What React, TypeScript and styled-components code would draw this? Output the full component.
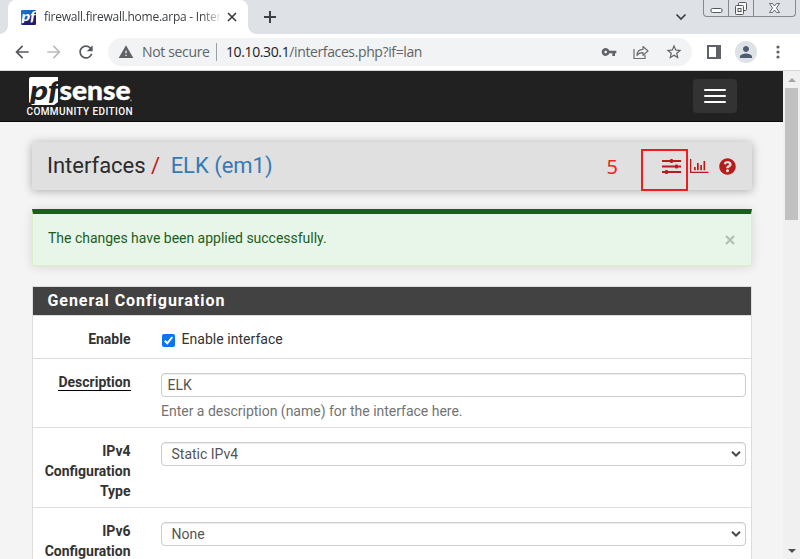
import React from 'react';
import styled, { createGlobalStyle } from 'styled-components';
import { FaQuestionCircle } from 'react-icons/fa';
import { MdVpnKey, MdStarOutline, MdPerson, MdRefresh, MdArrowBack, MdArrowForward, MdWarning } from 'react-icons/md';

const GlobalStyle = createGlobalStyle`
  *, *::before, *::after { box-sizing: border-box; }
  html, body { margin: 0; height: 100%; overflow: hidden; }
  body { font-family: Roboto, "Liberation Sans", sans-serif; font-size: 14px; }
  svg { display: block; flex: none; overflow: visible; }
  button { border: 0; padding: 0; background: none; font: inherit; }
`;

const Window = styled.div`
  width: 800px;
  height: 559px;
  display: flex;
  flex-direction: column;
  overflow: hidden;
  background: #fff;
`;

/* Browser chrome */
const TabStrip = styled.header`
  height: 34px;
  flex: none;
  display: flex;
  background: #dee1e6;
  padding-left: 8px;
`;
const Tab = styled.div`
  position: relative;
  width: 240px;
  height: 34px;
  display: flex;
  align-items: center;
  padding: 0 11px 0 13px;
  background: #fff;
  border-radius: 8px 8px 0 0;
  &::before, &::after {
    content: "";
    position: absolute;
    bottom: 0;
    width: 8px;
    height: 8px;
  }
  &::before { left: -8px; background: radial-gradient(circle at 0 0, transparent 7.5px, #fff 8px); }
  &::after { right: -8px; background: radial-gradient(circle at 100% 0, transparent 7.5px, #fff 8px); }
`;
const TabTitle = styled.span`
  width: 176px;
  margin-left: 8px;
  white-space: nowrap;
  font: 12px/16px "Open Sans", sans-serif;
  letter-spacing: -0.24px;
  color: #3c4043;
  mask-image: linear-gradient(90deg, #000 158px, transparent 178px);
`;
const TabClose = styled.button`
  margin-left: auto;
`;
const NewTab = styled.button`
  margin: 10px 0 0 15px;
  height: 14px;
`;
const TabSearch = styled.button`
  margin: 13px 16px 0 auto;
  height: 8px;
`;
const WindowControls = styled.div`
  display: flex;
  width: 93px;
  height: 17px;
  margin-right: 4px;
  border: 1px solid #85888d;
  border-top: 0;
  border-radius: 0 0 4px 4px;
`;
const WindowButton = styled.button<{ $w: number }>`
  width: ${p => p.$w}px;
  display: flex;
  justify-content: center;
  & + & { border-left: 1px solid #85888d; }
`;
const Toolbar = styled.div`
  height: 37px;
  flex: none;
  display: flex;
  align-items: center;
  padding: 0 13px 0 12px;
  border-bottom: 1px solid #d5d6d8;
  color: #5f6368;
`;
const NavButton = styled.button<{ $dim?: boolean }>`
  width: 18px;
  margin-right: 14px;
  color: ${p => (p.$dim ? '#babcbe' : '#55585d')};
`;
const Omnibox = styled.div`
  width: 584px;
  height: 28px;
  display: flex;
  align-items: center;
  padding: 0 9px 0 10px;
  border-radius: 14px;
  background: #f1f3f4;
  font: 14px/20px "Open Sans", sans-serif;
`;
const Security = styled.span`
  margin-left: 8px;
  width: 74px;
  padding-bottom: 1px;
  white-space: nowrap;
  letter-spacing: -0.34px;
`;
const Url = styled.span`
  height: 18px;
  padding-left: 9px;
  border-left: 1px solid #9aa0a6;
  line-height: 17px;
  letter-spacing: -0.38px;
  b { font-weight: 400; color: #202124; }
`;
const OmniActions = styled.div`
  margin-left: auto;
  display: flex;
  align-items: center;
  gap: 16px;
`;
const ToolActions = styled.div`
  display: flex;
  align-items: center;
  margin-left: 15px;
`;
const Avatar = styled.div`
  width: 22px;
  height: 22px;
  margin: 0 19px 0 14px;
  display: grid;
  place-items: center;
  border-radius: 50%;
  background: #dee1e6;
  color: #4f5b70;
`;

/* Page */
const Viewport = styled.div`
  flex: 1;
  min-height: 0;
  display: flex;
`;
const Page = styled.div`
  flex: 1;
  height: 488px;
  overflow: hidden;
  background: #f4f4f4;
  color: #333;
`;
const Navbar = styled.nav`
  height: 51px;
  display: flex;
  align-items: center;
  justify-content: space-between;
  padding: 0 46px 0 26px;
  background: #212121;
  border-bottom: 1px solid #080808;
`;
const Brand = styled.div`
  width: 108px;
  height: 40px;
  color: #fff;
`;
const LogoRow = styled.div`
  display: flex;
  height: 30px;
  padding: 1px 0 0 3px;
`;
const Edition = styled.div`
  padding-left: 0.5px;
  font: 500 10px/12px Roboto, sans-serif;
  letter-spacing: 0.4px;
  white-space: nowrap;
`;
const MenuToggle = styled.button`
  width: 44px;
  height: 34px;
  display: flex;
  flex-direction: column;
  align-items: center;
  justify-content: center;
  gap: 4px;
  border-radius: 4px;
  background: #333;
`;
const MenuBar = styled.span`
  width: 22px;
  height: 2px;
  background: #fff;
  border-radius: 1px;
`;
const Content = styled.main`
  padding: 20px 31px 0 32px;
`;
const TitleBar = styled.section`
  position: relative;
  height: 48px;
  display: flex;
  align-items: center;
  padding: 0 16px 0 15px;
  background: #e0e0e0;
  border-radius: 2px;
  box-shadow: 0 1px 10px rgba(0, 0, 0, 0.3);
`;
const Crumbs = styled.h1`
  margin: 0;
  display: flex;
  font: 400 22px/30px Roboto, sans-serif;
  letter-spacing: -0.02px;
  color: #2b2b2b;
  a { color: #337ab7; }
`;
const Slash = styled.span`
  margin: 0 10.5px 0 5.5px;
  color: #b71c1c;
`;
const TitleIcons = styled.div`
  margin-left: auto;
  display: flex;
  align-items: center;
  color: #b71c1c;
`;
const ChartSlot = styled.span`
  margin: 0 10px 0 9px;
`;
const CalloutFrame = styled.div`
  position: absolute;
  left: 609px;
  top: 7px;
  width: 47px;
  height: 42px;
  border: 2px solid #ee1c25;
`;
const CalloutNumber = styled.span`
  position: absolute;
  left: 574.5px;
  top: 11px;
  font: 20px/28px "Noto Sans", sans-serif;
  color: #fa1c22;
`;
const Alert = styled.section`
  height: 57px;
  margin-top: 19px;
  display: flex;
  justify-content: space-between;
  padding: 14px 16px 0 15px;
  border: 1px solid #dcedc8;
  border-top: 5px solid #1b5e20;
  background: #e8f5e9;
  box-shadow: 0 1px 10px rgba(0, 0, 0, 0.12);
  color: #1b5e20;
  line-height: 20px;
  letter-spacing: -0.02px;
`;
const AlertClose = styled.button`
  height: 10px;
  margin-top: 7px;
`;
const Panel = styled.section`
  margin-top: 20px;
  height: 320px;
  background: #fff;
  border: 1px solid #ddd;
`;
const PanelTitle = styled.h2`
  margin: 0;
  height: 29px;
  padding-left: 14.5px;
  background: #424242;
  border-bottom: 1px solid #ddd;
  color: #fff;
  font: 700 16px/28px Roboto, sans-serif;
  letter-spacing: 0.95px;
`;
const Row = styled.div<{ $h: number; $top: number }>`
  height: ${p => p.$h}px;
  display: grid;
  grid-template-columns: 97.5px 585px;
  column-gap: 30.5px;
  align-items: start;
  padding-top: ${p => p.$top}px;
  border-bottom: 1px solid #ddd;
  line-height: 20px;
`;
const Label = styled.div<{ $lift?: boolean }>`
  margin-top: ${p => (p.$lift ? -1 : 0)}px;
  text-align: right;
  font-weight: 700;
  color: #333;
`;
const Required = styled.span`
  display: inline-block;
  height: 18px;
  line-height: 19px;
  border-bottom: 1px solid #000;
`;
const CheckLine = styled.label`
  display: flex;
  align-items: center;
  padding-left: 1px;
  letter-spacing: 0.04px;
`;
const CheckBox = styled.span`
  width: 13px;
  height: 13px;
  margin: 2px 6.5px 0 0;
  border-radius: 2px;
  background: #0b76ef;
`;
const TextInput = styled.input`
  display: block;
  width: 585px;
  height: 24px;
  padding: 0 5.5px;
  border: 1px solid #ccc;
  border-radius: 4px;
  box-shadow: inset 0 1px 1px rgba(0, 0, 0, 0.075);
  color: #555;
  background: #fff;
  font: 14px Roboto, sans-serif;
`;
const Help = styled.div`
  margin-top: 4px;
  color: #737373;
  letter-spacing: -0.01px;
`;
const SelectBox = styled.div`
  width: 585px;
  height: 24px;
  display: flex;
  align-items: center;
  justify-content: space-between;
  padding: 0 4px 0 9.5px;
  border: 1px solid #ccc;
  border-radius: 4px;
  box-shadow: inset 0 1px 1px rgba(0, 0, 0, 0.075);
  color: #555;
`;
const Scrollbar = styled.aside`
  width: 17px;
  display: flex;
  flex-direction: column;
  align-items: center;
  background: #f0f0f0;
`;
const Thumb = styled.div`
  width: 13px;
  height: 132px;
  margin: 6px 0 auto;
  background: #c1c1c1;
`;
const ArrowUp = styled.div`
  margin-top: 7px;
  border: 4px solid transparent;
  border-top: 0;
  border-bottom-color: #a3a3a3;
`;
const ArrowDown = styled.div`
  margin-bottom: 6px;
  border: 4px solid transparent;
  border-bottom: 0;
  border-top-color: #505050;
`;

const Cross = ({ size, color, width }: { size: number; color: string; width: number }) => (
  <svg width={size} height={size} viewBox="0 0 10 10" stroke={color} strokeWidth={width}>
    <path d="M1 1l8 8M9 1L1 9" />
  </svg>
);

const Favicon = () => (
  <svg width="15" height="15" viewBox="0 0 15 15">
    <defs>
      <linearGradient id="fav" x2="1" y2="1">
        <stop stopColor="#1576d2" />
        <stop offset=".5" stopColor="#1760bd" />
        <stop offset=".55" stopColor="#211a70" />
      </linearGradient>
    </defs>
    <rect width="15" height="15" rx="1" fill="url(#fav)" />
    <text x="0.5" y="11" fontFamily="Lato, sans-serif" fontWeight="900" fontStyle="italic" fontSize="12.5" fill="#fff" textLength="14" lengthAdjust="spacingAndGlyphs">pf</text>
  </svg>
);

const Logo = () => (
  <svg width="105" height="30" viewBox="0 0 105 30">
    <path d="M2 0H29V25L25 28H3L0 25V2Q0 0 2 0Z" fill="#fff" />
    <text x="1" y="23" fontFamily="Lato, sans-serif" fontWeight="900" fontStyle="italic" fontSize="27" fill="#212121" textLength="29" lengthAdjust="spacingAndGlyphs">pf</text>
    <text x="30.5" y="23" fontFamily="Lato, sans-serif" fontWeight="900" fontSize="27" fill="#fff" stroke="#fff" strokeWidth="0.4" textLength="71" lengthAdjust="spacingAndGlyphs">sense</text>
    <circle cx="102" cy="23.5" r="1" fill="#777" />
  </svg>
);

const ShareIcon = () => (
  <svg width="16" height="15" viewBox="0 0 16 15" fill="none" stroke="#6b6e72" strokeWidth="1.2">
    <path d="M1 4V13.5H12V10" />
    <path d="M4 10.5Q4 4.5 10 4.3V1.5L15 6L10 10.3V7.6Q6 7.4 4 10.5Z" strokeLinejoin="round" />
  </svg>
);

const SlidersIcon = () => (
  <svg width="19" height="17" viewBox="0 0 19 17" fill="currentColor">
    <path d="M0 2h19v2H0zM0 7.500h19v2H0zM0 13h19v2H0z" />
    <rect x="8" y="1" width="3" height="4" rx="1" />
    <rect x="13" y="6.5" width="3" height="4" rx="1" />
    <rect x="3" y="12" width="3" height="4" rx="1" />
  </svg>
);

const ChartIcon = () => (
  <svg width="19" height="15" viewBox="0 0 19 15" fill="currentColor">
    <path d="M0 0h1.3v12.7H18.5V14H0zM4 8h1.700v3.3H4zM7 4h1.700v7.3H7zM10.300 6h1.700v5.300h-1.700zM13.500 2h1.700v9.300h-1.700z" />
  </svg>
);

const SelectArrow = () => (
  <svg width="10" height="8" viewBox="0 0 10 8" fill="none" stroke="#444" strokeWidth="2">
    <path d="M1 1.700L5 5.700L9 1.700" />
  </svg>
);

const Select = ({ value }: { value: string }) => (
  <SelectBox role="combobox">
    {value}
    <SelectArrow />
  </SelectBox>
);

export default function App() {
  return (
    <Window>
      <GlobalStyle />
      <TabStrip>
        <Tab>
          <Favicon />
          <TabTitle>firewall.firewall.home.arpa - Interf</TabTitle>
          <TabClose aria-label="Close tab"><Cross size={10} color="#3c4043" width={1.7} /></TabClose>
        </Tab>
        <NewTab aria-label="New tab">
          <svg width="14" height="14" viewBox="0 0 14 14" stroke="#3c4043" strokeWidth="2"><path d="M7 1v12M1 7h12" /></svg>
        </NewTab>
        <TabSearch aria-label="Search tabs">
          <svg width="12" height="8" viewBox="0 0 12 8" fill="none" stroke="#3c4043" strokeWidth="1.700"><path d="M1.500 1.500L6 6L10.500 1.500" /></svg>
        </TabSearch>
        <WindowControls>
          <WindowButton $w={24} aria-label="Minimize">
            <svg width="13" height="16" viewBox="0 0 13 16"><rect x="1" y="8.500" width="11" height="4" rx="1.500" fill="#fff" stroke="#54575c" /></svg>
          </WindowButton>
          <WindowButton $w={25} aria-label="Restore">
            <svg width="14" height="16" viewBox="0 0 14 16" fill="#f6f6f7" stroke="#54575c"><rect x="4.500" y="2.500" width="8" height="8" rx="1" /><rect x="1.500" y="5.500" width="8" height="9" rx="1" /><rect x="4" y="8.500" width="3" height="3" /></svg>
          </WindowButton>
          <WindowButton $w={42} aria-label="Close">
            <svg width="13" height="16" viewBox="0 0 13 16" fill="#f6f6f7" stroke="#686b70"><path d="M1.500 3.500H4.500L6.500 6L8.500 3.500H11.500L8.500 8L11.500 12.500H8.500L6.500 10L4.500 12.500H1.500L4.500 8Z" /></svg>
          </WindowButton>
        </WindowControls>
      </TabStrip>
      <Toolbar>
        <NavButton aria-label="Back"><MdArrowBack size={20} /></NavButton>
        <NavButton $dim aria-label="Forward"><MdArrowForward size={20} /></NavButton>
        <NavButton aria-label="Reload"><MdRefresh size={20} /></NavButton>
        <Omnibox>
          <MdWarning size={16} />
          <Security>Not secure</Security>
          <Url><b>10.10.30.1</b>/interfaces.php?if=lan</Url>
          <OmniActions>
            <MdVpnKey size={16} />
            <ShareIcon />
            <MdStarOutline size={18} />
          </OmniActions>
        </Omnibox>
        <ToolActions>
          <svg width="14" height="14" viewBox="0 0 14 14"><path d="M1 1H13V13H1Z" fill="none" stroke="#5f6368" strokeWidth="2" /><path d="M9 1h4v12H9z" fill="#5f6368" /></svg>
          <Avatar><MdPerson size={18} /></Avatar>
          <svg width="4" height="14" viewBox="0 0 4 14" fill="#5f6368"><circle cx="2" cy="2" r="1.600" /><circle cx="2" cy="7" r="1.600" /><circle cx="2" cy="12" r="1.600" /></svg>
        </ToolActions>
      </Toolbar>
      <Viewport>
        <Page>
          <Navbar>
            <Brand>
              <LogoRow><Logo /></LogoRow>
              <Edition>COMMUNITY EDITION</Edition>
            </Brand>
            <MenuToggle aria-label="Menu"><MenuBar /><MenuBar /><MenuBar /></MenuToggle>
          </Navbar>
          <Content>
            <TitleBar>
              <Crumbs>Interfaces<Slash>/</Slash><a>ELK (em1)</a></Crumbs>
              <TitleIcons>
                <SlidersIcon />
                <ChartSlot><ChartIcon /></ChartSlot>
                <FaQuestionCircle size={17} />
              </TitleIcons>
              <CalloutNumber>5</CalloutNumber>
              <CalloutFrame />
            </TitleBar>
            <Alert>
              The changes have been applied successfully.
              <AlertClose aria-label="Dismiss"><Cross size={10} color="#b4c0b6" width={2.3} /></AlertClose>
            </Alert>
            <Panel>
              <PanelTitle>General Configuration</PanelTitle>
              <Row $h={43} $top={13}>
                <Label>Enable</Label>
                <CheckLine>
                  <CheckBox>
                    <svg width="13" height="13" viewBox="0 0 13 13" fill="none" stroke="#fff" strokeWidth="2"><path d="M2.800 6.800L5.300 9.300L10.300 3" /></svg>
                  </CheckBox>
                  Enable interface
                </CheckLine>
              </Row>
              <Row $h={69} $top={14}>
                <Label $lift><Required>Description</Required></Label>
                <div>
                  <TextInput defaultValue="ELK" />
                  <Help>Enter a description (name) for the interface here.</Help>
                </div>
              </Row>
              <Row $h={80} $top={14}>
                <Label $lift>IPv4 Configuration Type</Label>
                <Select value="Static IPv4" />
              </Row>
              <Row $h={80} $top={14}>
                <Label $lift>IPv6 Configuration Type</Label>
                <Select value="None" />
              </Row>
            </Panel>
          </Content>
        </Page>
        <Scrollbar>
          <ArrowUp />
          <Thumb />
          <ArrowDown />
        </Scrollbar>
      </Viewport>
    </Window>
  );
}
